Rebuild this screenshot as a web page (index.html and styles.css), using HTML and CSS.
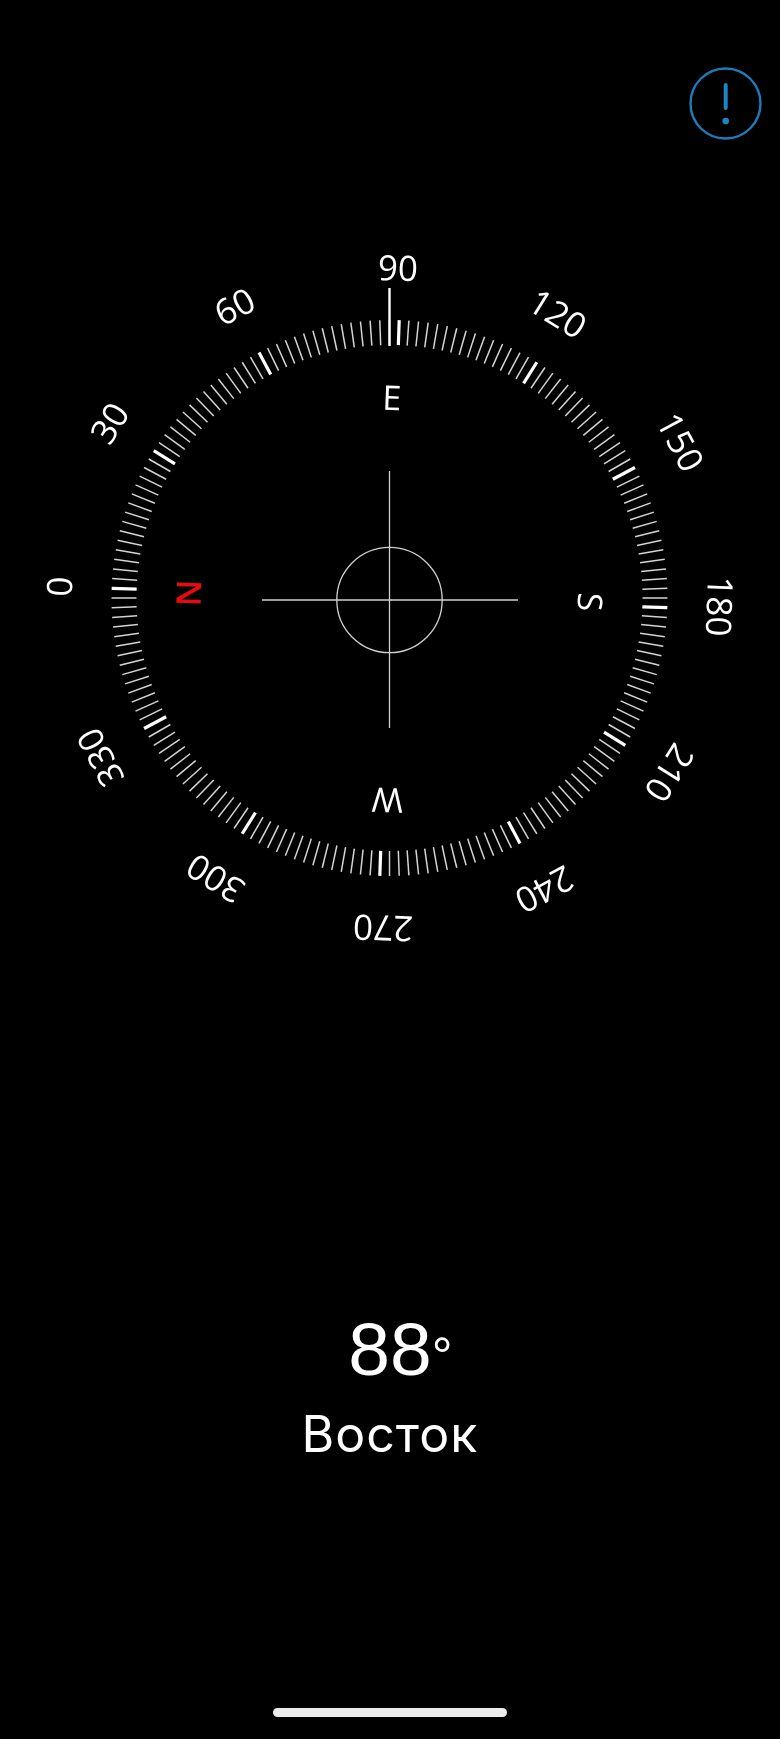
FILE: index.html
```html
<!DOCTYPE html>
<html lang="ru">
<head>
<meta charset="utf-8">
<title>Компас</title>
<link rel="stylesheet" href="styles.css">
</head>
<body>
<main class="screen">
  <header class="top">
    <svg class="info" viewBox="0 0 76 76" aria-label="Информация">
      <circle class="info-ring" cx="37.5" cy="37.5" r="35"/>
      <line class="info-bar" x1="37.7" y1="19" x2="37.7" y2="42"/>
      <circle class="info-dot" cx="37.7" cy="55" r="3.3"/>
    </svg>
  </header>

  <svg class="dial" viewBox="0 142 780 820">
    <defs>
      <g id="sector">
        <line class="tick-major" y1="-278" y2="-253"/>
        <line class="tick" y1="-278" y2="-253" transform="rotate(2)"/>
        <line class="tick" y1="-278" y2="-253" transform="rotate(4)"/>
        <line class="tick" y1="-278" y2="-253" transform="rotate(6)"/>
        <line class="tick" y1="-278" y2="-253" transform="rotate(8)"/>
        <line class="tick" y1="-278" y2="-253" transform="rotate(10)"/>
        <line class="tick" y1="-278" y2="-253" transform="rotate(12)"/>
        <line class="tick" y1="-278" y2="-253" transform="rotate(14)"/>
        <line class="tick" y1="-278" y2="-253" transform="rotate(16)"/>
        <line class="tick" y1="-278" y2="-253" transform="rotate(18)"/>
        <line class="tick" y1="-278" y2="-253" transform="rotate(20)"/>
        <line class="tick" y1="-278" y2="-253" transform="rotate(22)"/>
        <line class="tick" y1="-278" y2="-253" transform="rotate(24)"/>
        <line class="tick" y1="-278" y2="-253" transform="rotate(26)"/>
        <line class="tick" y1="-278" y2="-253" transform="rotate(28)"/>
      </g>
    </defs>
    <g transform="translate(389.5 598) rotate(-88)">
      <use href="#sector"/>
      <use href="#sector" transform="rotate(30)"/>
      <use href="#sector" transform="rotate(60)"/>
      <use href="#sector" transform="rotate(90)"/>
      <use href="#sector" transform="rotate(120)"/>
      <use href="#sector" transform="rotate(150)"/>
      <use href="#sector" transform="rotate(180)"/>
      <use href="#sector" transform="rotate(210)"/>
      <use href="#sector" transform="rotate(240)"/>
      <use href="#sector" transform="rotate(270)"/>
      <use href="#sector" transform="rotate(300)"/>
      <use href="#sector" transform="rotate(330)"/>
      <text class="deg" transform="rotate(0)" y="-317.5">0</text>
      <text class="deg" transform="rotate(30)" y="-317.5">30</text>
      <text class="deg" transform="rotate(60)" y="-317.5">60</text>
      <text class="deg" transform="rotate(90)" x="-3" y="-317.5">90</text>
      <text class="deg" transform="rotate(120)" x="-8" y="-317.5">120</text>
      <text class="deg" transform="rotate(150)" x="-1" y="-317.5">150</text>
      <text class="deg" transform="rotate(180)" x="-3" y="-317.5">180</text>
      <text class="deg" transform="rotate(210)" y="-317.5">210</text>
      <text class="deg" transform="rotate(240)" y="-317.5">240</text>
      <text class="deg" transform="rotate(270)" x="-5" y="-317.5">270</text>
      <text class="deg" transform="rotate(300)" x="-1" y="-317.5">300</text>
      <text class="deg" transform="rotate(330)" x="-5" y="-317.5">330</text>
      <text class="card north" transform="rotate(0)" x="-2" y="-188.5">N</text>
      <text class="card" transform="rotate(90)" x="-4.5" y="-188">E</text>
      <text class="card" transform="rotate(180)" x="-3" y="-188.5">S</text>
      <text class="card" transform="rotate(270)" x="-5" y="-190">W</text>
    </g>
    <line class="needle" x1="389.5" y1="288" x2="389.5" y2="346"/>
    <line class="cross" x1="262" y1="600" x2="518" y2="600"/>
    <line class="cross" x1="389.5" y1="471" x2="389.5" y2="728"/>
    <circle class="cross" cx="389.5" cy="600" r="52.7"/>
  </svg>

  <section class="readout">
    <div class="heading"><span class="heading-value">88<span class="heading-unit">°</span></span></div>
    <div class="direction">Восток</div>
  </section>

  <div class="home-bar"></div>
</main>
</body>
</html>
```
FILE: styles.css
```css
* { box-sizing: border-box; }

html, body {
  margin: 0;
  background: #000;
}

.screen {
  width: 780px;
  height: 1739px;
  display: flex;
  flex-direction: column;
  background: #000;
  color: #fff;
  overflow: hidden;
}

.top {
  display: flex;
  justify-content: flex-end;
  padding: 66px 16px 0 0;
}

.info {
  display: block;
  width: 76px;
  height: 76px;
}

.info-ring {
  fill: none;
  stroke: #1b7cba;
  stroke-width: 2.4;
}

.info-bar {
  stroke: #1b85c8;
  stroke-width: 4;
  stroke-linecap: round;
}

.info-dot {
  fill: #1b85c8;
}

.dial {
  display: block;
  width: 780px;
  height: 820px;
  filter: blur(0.4px);
}

.tick {
  stroke: #d4d4d4;
  stroke-width: 1.5;
}

.tick-major {
  stroke: #fff;
  stroke-width: 3.2;
}

.deg,
.card {
  font-family: "Open Sans", "Noto Sans", sans-serif;
  fill: #fff;
  text-anchor: middle;
}

.deg {
  font-size: 35px;
}

.card {
  font-size: 34px;
}

.north {
  fill: #e30d0d;
  font-weight: 600;
}

.needle {
  stroke: #fff;
  stroke-width: 2.4;
}

.cross {
  fill: none;
  stroke: #d0d0d0;
  stroke-width: 1.3;
}

.readout {
  margin-top: 350px;
  font-family: "Liberation Sans", Arial, sans-serif;
  text-align: center;
}

.heading {
  font-size: 75px;
  line-height: 75px;
}

.heading-value {
  position: relative;
  display: inline-block;
}

.heading-unit {
  position: absolute;
  left: 100%;
  top: 18px;
  font-size: 52px;
  line-height: 52px;
}

.direction {
  margin-top: 22px;
  font-family: "Inter", "Liberation Sans", sans-serif;
  font-size: 50px;
  line-height: 50px;
  letter-spacing: 1px;
}

.home-bar {
  width: 234px;
  height: 9px;
  margin: auto auto 22px;
  border-radius: 5px;
  background: #ececec;
}
```
